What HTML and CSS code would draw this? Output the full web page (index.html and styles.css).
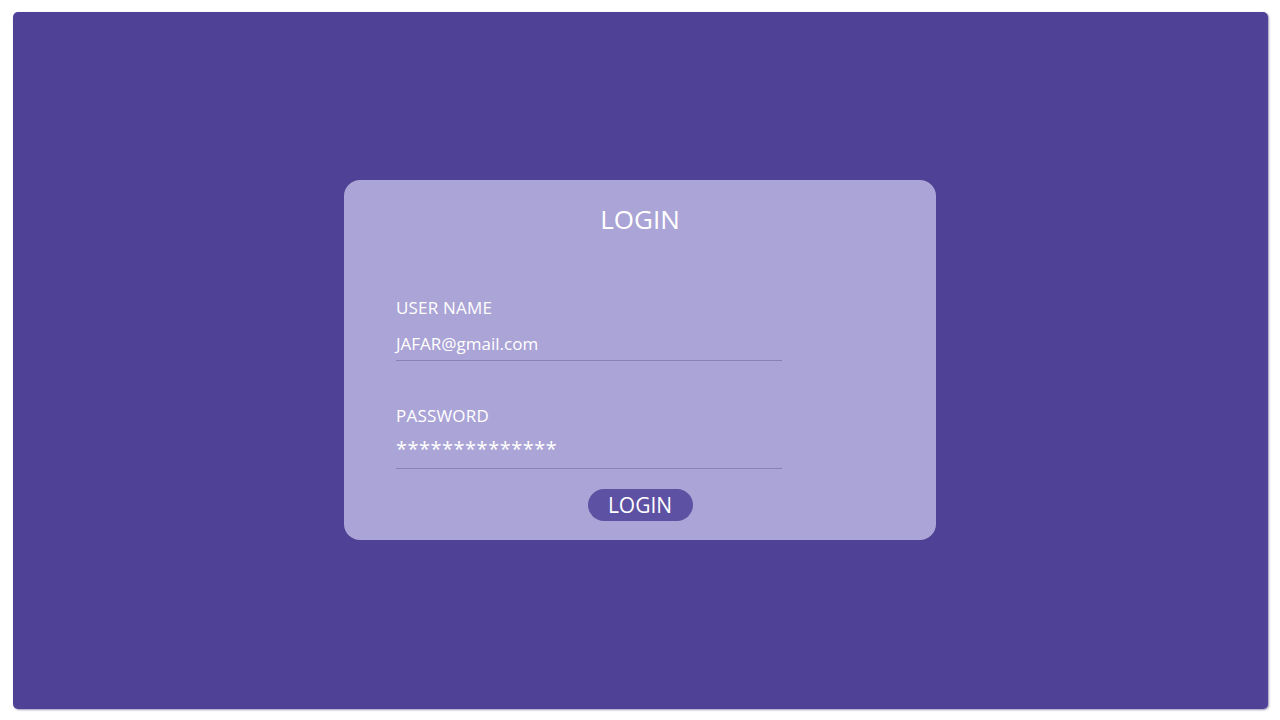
FILE: index.html
```html
<!DOCTYPE html>
<html>
<head>
<meta charset="utf-8">
<link rel="stylesheet" href="styles.css">
</head>
<body>
<div class="frame">
  <div class="card">
    <h1 class="title">LOGIN</h1>
    <div class="form">
      <div class="field">
        <label class="label">USER NAME</label>
        <div class="input">JAFAR@gmail.com</div>
      </div>
      <div class="field field-pass">
        <label class="label">PASSWORD</label>
        <div class="input input-pass">**************</div>
      </div>
    </div>
    <div class="actions">
      <button class="btn">LOGIN</button>
    </div>
  </div>
</div>
</body>
</html>
```
FILE: styles.css
```css
html, body {
  margin: 0;
  padding: 0;
  background: #ffffff;
  width: 1280px;
  height: 720px;
  overflow: hidden;
}
body {
  box-sizing: border-box;
  padding: 12px 12px 11px 13px;
  font-family: "Open Sans", "Noto Sans", sans-serif;
}
.frame {
  width: 100%;
  height: 100%;
  background: #4f4296;
  border-radius: 5px;
  box-shadow: 1px 1px 2px rgba(60, 50, 120, 0.5);
  display: flex;
  align-items: center;
  justify-content: center;
}
.card {
  box-sizing: border-box;
  width: 592px;
  height: 360px;
  margin: 0 1px 1px 0;
  background: #aba4d6;
  border-radius: 16px;
  padding: 21px 0 0 52px;
  display: flex;
  flex-direction: column;
  color: #ffffff;
}
.title {
  margin: 0 52px 0 0;
  font-size: 26px;
  font-weight: 400;
  line-height: 36px;
  text-align: center;
}
.form {
  margin-top: 59px;
  width: 386px;
  display: flex;
  flex-direction: column;
}
.label {
  display: block;
  font-size: 17px;
  line-height: 24px;
  letter-spacing: 0.2px;
}
.input {
  margin-top: 12px;
  font-size: 17px;
  line-height: 24px;
  border-bottom: 1px solid #8a82b4;
  padding-bottom: 4px;
}
.field-pass {
  margin-top: 43px;
}
.input-pass {
  margin-top: 7px;
  font-size: 20px;
  line-height: 28px;
  letter-spacing: 0.5px;
  padding-bottom: 5px;
}
.actions {
  margin: 20px 52px 0 0;
  display: flex;
  justify-content: center;
}
.btn {
  width: 105px;
  height: 32px;
  border: none;
  border-radius: 16px;
  background: #5d51a3;
  color: #ffffff;
  font-family: "Open Sans", "Noto Sans", sans-serif;
  font-size: 21px;
  line-height: 32px;
  padding: 0;
}
```
